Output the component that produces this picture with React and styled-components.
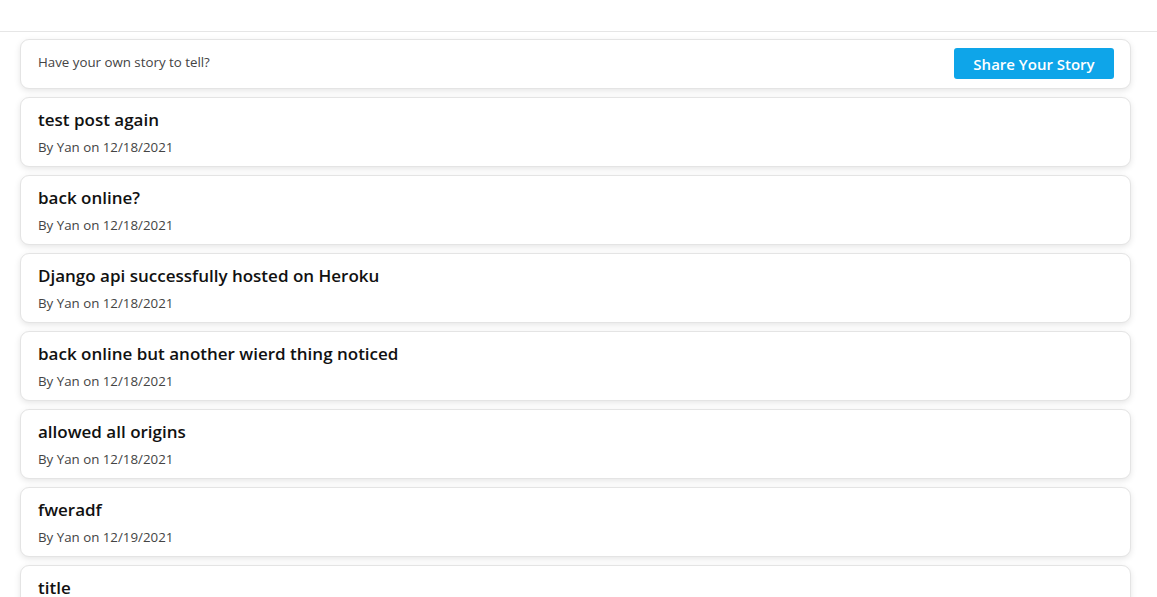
import styled, { createGlobalStyle } from "styled-components";

const GlobalStyle = createGlobalStyle`
  body {
    margin: 0;
    background: #ffffff;
    font-family: "Open Sans", "Noto Sans", sans-serif;
    color: #111;
  }
`;

const posts = [
  { title: "test post again", author: "Yan", date: "12/18/2021" },
  { title: "back online?", author: "Yan", date: "12/18/2021" },
  { title: "Django api successfully hosted on Heroku", author: "Yan", date: "12/18/2021" },
  { title: "back online but another wierd thing noticed", author: "Yan", date: "12/18/2021" },
  { title: "allowed all origins", author: "Yan", date: "12/18/2021" },
  { title: "fweradf", author: "Yan", date: "12/19/2021" },
  { title: "title", author: "Yan", date: "12/19/2021" },
];

const App = () => {
  return (
    <>
      <GlobalStyle />
      <Header />
      <Feed>
        <Card $compact>
          <Prompt>Have your own story to tell?</Prompt>
          <ShareButton>Share Your Story</ShareButton>
        </Card>
        {posts.map((post, i) => (
          <Card key={i} $column>
            <Title>{post.title}</Title>
            <Meta>
              By {post.author} on {post.date}
            </Meta>
          </Card>
        ))}
      </Feed>
    </>
  );
};

const Header = styled.header`
  height: 31px;
  border-bottom: 1px solid #e6e6e6;
  background: #fff;
`;

const Feed = styled.main`
  display: flex;
  flex-direction: column;
  gap: 8px;
  width: 1111px;
  margin: 7px 0 0 20px;
  padding-bottom: 20px;
`;

const Card = styled.div`
  display: flex;
  flex-direction: ${(p) => (p.$column ? "column" : "row")};
  justify-content: space-between;
  align-items: flex-start;
  box-sizing: border-box;
  height: ${(p) => (p.$compact ? "50px" : "70px")};
  padding: ${(p) => (p.$compact ? "8px 16px 8px 17px" : "10px 17px")};
  border: 1px solid #e4e4e4;
  border-radius: 9px;
  background: #fff;
  box-shadow: 0 2px 6px rgba(0, 0, 0, 0.1);
`;

const Prompt = styled.p`
  margin: 5px 0 0;
  font-size: 13.3px;
  color: #444;
`;

const ShareButton = styled.button`
  width: 160px;
  height: 31px;
  border: none;
  border-radius: 3px;
  background: #0ea5e9;
  color: #fff;
  font-family: inherit;
  font-size: 15px;
  font-weight: 600;
  cursor: pointer;
`;

const Title = styled.h3`
  margin: 0;
  font-size: 17px;
  font-weight: 600;
  line-height: 24px;
  color: #111;
`;

const Meta = styled.span`
  margin-top: 5px;
  font-size: 13.3px;
  color: #444;
`;

export default App;
